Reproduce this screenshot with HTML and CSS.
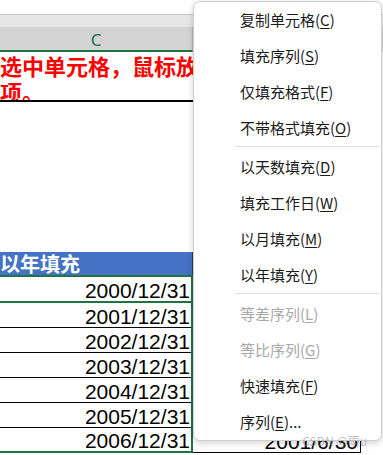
FILE: index.html
```html
<!DOCTYPE html>
<html>
<head>
<meta charset="utf-8">
<link rel="stylesheet" href="styles.css">
</head>
<body>

<div class="sheet">
    <div class="ribbon-edge"></div>
    <div class="col-strip"></div>
    <div class="col-head">
        <div class="col-c">C</div>
    </div>

    <div class="note">选中单元格，鼠标放<br>项。</div>
    <div class="blank"></div>
    <div class="head">以年填充</div>

    <div class="data">
        <div class="selection">
            <div class="date first">2000/12/31</div>
            <div class="date">2001/12/31</div>
            <div class="date">2002/12/31</div>
            <div class="date">2003/12/31</div>
            <div class="date">2004/12/31</div>
            <div class="date">2005/12/31</div>
            <div class="date">2006/12/31</div>
        </div>
        <div class="col-d">
            <div class="cell-d">2001/6/30</div>
        </div>
    </div>
</div>

<!-- autofill options menu -->
<div class="menu">
    <div class="item">复制单元格(<u>C</u>)</div>
    <div class="item">填充序列(<u>S</u>)</div>
    <div class="item">仅填充格式(<u>F</u>)</div>
    <div class="item">不带格式填充(<u>O</u>)</div>
    <div class="sep"></div>
    <div class="item">以天数填充(<u>D</u>)</div>
    <div class="item">填充工作日(<u>W</u>)</div>
    <div class="item">以月填充(<u>M</u>)</div>
    <div class="item">以年填充(<u>Y</u>)</div>
    <div class="sep"></div>
    <div class="item disabled">等差序列(<u>L</u>)</div>
    <div class="item disabled">等比序列(<u>G</u>)</div>
    <div class="item">快速填充(<u>F</u>)</div>
    <div class="item">序列(<u>E</u>)...</div>
</div>

<div class="watermark">CSDN @雨u</div>

</body>
</html>
```

FILE: styles.css
```css
body {
    margin: 0;
    width: 383px;
    height: 455px;
    overflow: hidden;
    position: relative;
    background-color: #ffffff;
    font-family: "Noto Sans CJK SC", "Noto Sans", sans-serif;
}

/* spreadsheet */
.ribbon-edge {
    height: 14px;
    border-bottom: 1px solid #c6c6c6;
}
.col-strip {
    height: 12px;
    background-color: #e6e6e6;
}
.col-head {
    display: flex;
    background-color: #d4d4d4;
}
.col-c {
    width: 192px;
    height: 23px;
    line-height: 25px;
    text-align: center;
    font-family: "Noto Sans", sans-serif;
    font-size: 17px;
    color: #1f6a58;
    border-right: 1px solid #b4b4b4;
    border-bottom: 2px solid #217346;
}

.note {
    box-sizing: border-box;
    width: 193px;
    height: 50px;
    padding-top: 1px;
    border-bottom: 2px solid #000000;
    font-size: 22px;
    font-weight: bold;
    line-height: 25.5px;
    color: #ff0000;
    white-space: nowrap;
    overflow: hidden;
}

.blank {
    height: 150px;
}

.head {
    box-sizing: border-box;
    width: 193px;
    height: 23px;
    background-color: #4472c4;
    border-right: 1px solid #2a3a5a;
    color: #ffffff;
    font-size: 20px;
    font-weight: bold;
    line-height: 23px;
    white-space: nowrap;
}

.data {
    display: flex;
}
.selection {
    box-sizing: border-box;
    width: 193px;
    border: 2px solid #217346;
    border-left: none;
}
.date {
    height: 24px;
    display: flex;
    justify-content: flex-end;
    align-items: flex-end;
    padding-right: 1px;
    border-bottom: 1px solid #000000;
    font-family: "Liberation Sans", Arial, sans-serif;
    font-size: 21px;
    line-height: 20px;
    color: #000000;
}
.date.first {
    border-bottom: 2px solid #217346;
}
.date:last-child {
    height: 23px;
    border-bottom: none;
}

.col-d {
    display: flex;
    flex-direction: column;
    justify-content: flex-end;
}
.cell-d {
    width: 165px;
    height: 24px;
    display: flex;
    justify-content: flex-end;
    align-items: flex-end;
    padding-right: 2px;
    border-right: 1px solid #000000;
    border-bottom: 1px solid #000000;
    font-family: "Liberation Sans", Arial, sans-serif;
    font-size: 21px;
    line-height: 20px;
}

/* context menu */
.menu {
    position: absolute;
    left: 193px;
    top: 1px;
    width: 187px;
    background-color: #ffffff;
    border: 1px solid #d0d0d0;
    border-radius: 7px;
    box-shadow: 0 2px 7px rgba(0, 0, 0, 0.18);
}
.item {
    height: 36px;
    line-height: 36px;
    padding-left: 46px;
    font-size: 15px;
    color: #1b1b1b;
    white-space: nowrap;
}
.item u {
    text-underline-offset: 2px;
}
.item.disabled {
    color: #a8a8a8;
}
.sep {
    height: 1px;
    margin: 0 2px 2px 41px;
    background-color: #dcdcdc;
}

.watermark {
    position: absolute;
    right: 16px;
    bottom: 6px;
    font-size: 12px;
    color: rgba(140, 140, 140, 0.55);
}
```
